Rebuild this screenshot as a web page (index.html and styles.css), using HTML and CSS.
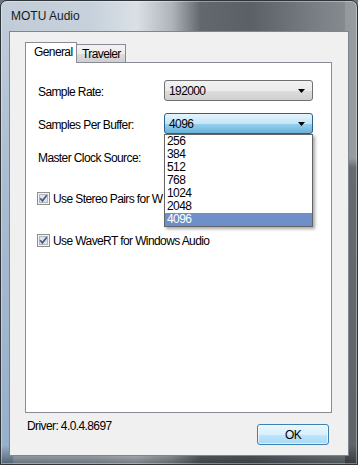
FILE: index.html
```html
<!DOCTYPE html>
<html lang="en">
  <head>
    <meta charset="UTF-8" />
    <title>MOTU Audio</title>
    <link rel="stylesheet" href="styles.css">
  </head>
  <body>
    <div class="window">
      <div class="titlebar">MOTU Audio</div>

      <div class="client">
        <div class="tabs">
          <div class="tab active">General</div>
          <div class="tab">Traveler</div>
        </div>

        <div class="panel">
          <div class="field">
            <span class="label">Sample Rate:</span>
            <div class="combo">
              <span>192000</span>
              <svg class="arrow" width="7" height="4" viewBox="0 0 7 4"><polygon points="0,0 7,0 3.5,4" fill="#000"/></svg>
            </div>
          </div>

          <div class="field">
            <span class="label">Samples Per Buffer:</span>
            <div class="combo open">
              <span>4096</span>
              <svg class="arrow" width="7" height="4" viewBox="0 0 7 4"><polygon points="0,0 7,0 3.5,4" fill="#000"/></svg>
            </div>
          </div>

          <div class="field">
            <span class="label">Master Clock Source:</span>
            <div class="combo"></div>
          </div>

          <div class="check first">
            <svg width="13" height="13" viewBox="0 0 13 13">
              <rect x="0.5" y="0.5" width="12" height="12" fill="#f4f4f4" stroke="#8e8f8f"/>
              <rect x="2.5" y="2.5" width="8" height="8" fill="#e2e3e4" stroke="#b4b6b8"/>
              <path d="M3.2 6.3 L5.4 8.8 L9.8 3.2" stroke="#3f5a94" stroke-width="1.7" fill="none"/>
            </svg>
            <span class="clipped">Use Stereo Pairs for Windows Audio</span>
          </div>

          <div class="check">
            <svg width="13" height="13" viewBox="0 0 13 13">
              <rect x="0.5" y="0.5" width="12" height="12" fill="#f4f4f4" stroke="#8e8f8f"/>
              <rect x="2.5" y="2.5" width="8" height="8" fill="#e2e3e4" stroke="#b4b6b8"/>
              <path d="M3.2 6.3 L5.4 8.8 L9.8 3.2" stroke="#3f5a94" stroke-width="1.7" fill="none"/>
            </svg>
            <span>Use WaveRT for Windows Audio</span>
          </div>

          <ul class="droplist">
            <li>256</li>
            <li>384</li>
            <li>512</li>
            <li>768</li>
            <li>1024</li>
            <li>2048</li>
            <li class="selected">4096</li>
          </ul>
        </div>

        <div class="footer">
          <span class="driver">Driver: 4.0.4.8697</span>
          <button class="ok-btn">OK</button>
        </div>
      </div>
    </div>
  </body>
</html>
```

FILE: styles.css
```css
* {
  margin: 0;
  padding: 0;
  box-sizing: border-box;
}

body {
  width: 358px;
  height: 465px;
  overflow: hidden;
  font-family: "Liberation Sans", Arial, sans-serif;
  font-size: 12px;
  letter-spacing: -0.6px;
  color: #000;
  background: #6d7378;
}

.window {
  width: 358px;
  height: 465px;
  padding: 0 8px 8px 8px;
  border: 1px solid #2f3438;
  border-radius: 7px 7px 0 0;
  box-shadow: inset 0 0 0 1px rgba(255, 255, 255, 0.35);
  background:
    linear-gradient(to bottom, rgba(255, 255, 255, 0.12) 0%, rgba(255, 255, 255, 0.12) 34%, rgba(0, 0, 0, 0.25) 36%, rgba(0, 0, 0, 0.3) 100%) right top / 12px 100% no-repeat,
    linear-gradient(to bottom, transparent 0%, transparent 96%, rgba(30, 35, 40, 0.55) 100%),
    linear-gradient(to bottom, #c2cedb 0%, #aabcd0 40%, #96afcc 100%) left top / 12px 100% no-repeat,
    linear-gradient(to right, #c1ccd7 0%, #c6d1db 25%, #dae0e5 38%, #aeb4b9 48%, #62686d 56%, #5a6065 70%, #7b8186 90%, #8a8f94 100%);
}

.titlebar {
  height: 30px;
  padding: 8px 0 0 2px;
  line-height: 14px;
  letter-spacing: 0;
  color: #1a1a1a;
}

.client {
  height: 425px;
  border: 1px solid #7c8790;
  background: #f0f0f0;
  padding: 10px 16px 0 15px;
}

.tabs {
  display: flex;
  align-items: flex-end;
  height: 20px;
}

.tab {
  height: 18px;
  padding: 2px 4px 0 5px;
  border: 1px solid #898c95;
  border-bottom: none;
  border-left: none;
  line-height: 14px;
  background: linear-gradient(to bottom, #f2f2f2 0%, #ebebeb 50%, #dddddd 51%, #cfcfcf 100%);
}

.tab.active {
  height: 21px;
  width: 52px;
  margin-bottom: -1px;
  padding: 2px 0 0 8px;
  border-left: 1px solid #898c95;
  background: #fff;
  position: relative;
  z-index: 1;
}

.panel {
  position: relative;
  height: 351px;
  border: 1px solid #898c95;
  background: #fff;
  padding: 17px 18px 0 12px;
}

.field {
  display: grid;
  grid-template-columns: 126px 149px;
  align-items: center;
  height: 21px;
  margin-bottom: 12px;
}

.label {
  padding-top: 3px;
}

.combo {
  display: flex;
  align-items: center;
  justify-content: space-between;
  height: 21px;
  padding: 0 4px 0 4px;
  border: 1px solid #707070;
  border-radius: 3px;
  background: linear-gradient(to bottom, #f2f2f2 0%, #ebebeb 50%, #dddddd 51%, #cfcfcf 100%);
  line-height: 14px;
}

.combo.open {
  border-color: #2c628b;
  background: linear-gradient(to bottom, #e5f4fc 0%, #c4e5f6 50%, #98d1ef 51%, #68b3db 100%);
}

.arrow {
  margin-right: 3px;
}

.check {
  display: flex;
  align-items: center;
  gap: 3px;
  height: 13px;
  margin-left: -1px;
  margin-top: 29px;
}

.check.first {
  margin-top: 25px;
}

/* the open list hides the end of this label */
.clipped {
  width: 110px;
  overflow: hidden;
  white-space: nowrap;
}

.droplist {
  position: absolute;
  left: 138px;
  top: 71px;
  width: 149px;
  list-style: none;
  border: 1px solid #646464;
  background: #fff;
  box-shadow: 2px 2px 3px rgba(0, 0, 0, 0.35);
  z-index: 2;
}

.droplist li {
  height: 13px;
  line-height: 13px;
  padding-left: 2px;
}

.droplist li.selected {
  background: #6f8fc9;
  color: #fff;
}

.footer {
  display: flex;
  justify-content: space-between;
  align-items: flex-start;
  padding: 6px 3px 0 2px;
}

.driver {
  line-height: 14px;
}

.ok-btn {
  width: 72px;
  height: 21px;
  margin-top: 5px;
  border: 1px solid #3c7fb1;
  border-radius: 3px;
  font-family: "Liberation Sans", Arial, sans-serif;
  font-size: 12px;
  letter-spacing: -0.6px;
  color: #000;
  background: linear-gradient(to bottom, #eaf6fd 0%, #d9f0fc 50%, #bee6fd 51%, #a7d9f5 100%);
  box-shadow: inset 0 0 0 1px rgba(255, 255, 255, 0.6);
}
```
